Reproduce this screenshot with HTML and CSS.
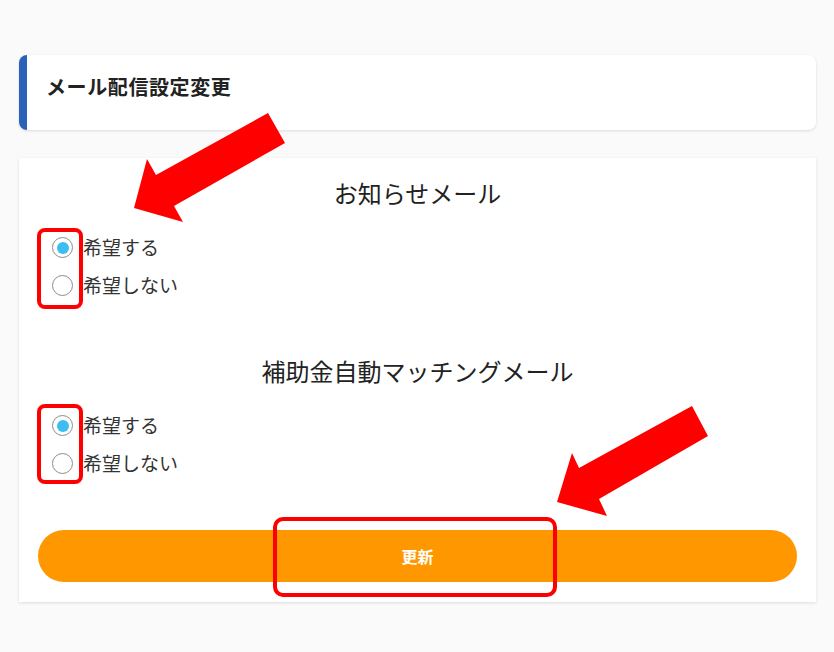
FILE: index.html
```html
<!DOCTYPE html>
<html lang="ja">
<head>
<meta charset="utf-8">
<title>メール配信設定変更</title>
<link rel="stylesheet" href="styles.css">
</head>
<body>
<div class="page">
  <div class="header-card">
    <h1 class="header-title">メール配信設定変更</h1>
  </div>
  <form class="main-card">
    <section class="section">
      <h2 class="section-title">お知らせメール</h2>
      <div class="options">
        <label class="option"><span class="radio checked"></span><span class="option-text">希望する</span></label>
        <label class="option"><span class="radio"></span><span class="option-text">希望しない</span></label>
      </div>
    </section>
    <section class="section section-second">
      <h2 class="section-title">補助金自動マッチングメール</h2>
      <div class="options">
        <label class="option"><span class="radio checked"></span><span class="option-text">希望する</span></label>
        <label class="option"><span class="radio"></span><span class="option-text">希望しない</span></label>
      </div>
    </section>
    <button type="button" class="submit">更新</button>
  </form>
</div>
<svg class="annotations" width="834" height="652" viewBox="0 0 834 652" xmlns="http://www.w3.org/2000/svg">
  <polygon fill="#ff0000" points="268,113 285,143 174,206 183,222 134,208 147,159 156,175"/>
  <polygon fill="#ff0000" points="692,406 708,436 599,499 607,516 557,502 572,453 579,468"/>
  <rect x="39" y="230" width="42" height="77" rx="6" fill="none" stroke="#ff0000" stroke-width="4"/>
  <rect x="39" y="406" width="42" height="76" rx="6" fill="none" stroke="#ff0000" stroke-width="4"/>
  <rect x="275" y="519" width="280" height="76" rx="8" fill="none" stroke="#ff0000" stroke-width="4"/>
</svg>
</body>
</html>
```

FILE: styles.css
```css
* {
  box-sizing: border-box;
}

html, body {
  margin: 0;
  padding: 0;
}

body {
  background: #fafafa;
  font-family: "Noto Sans CJK JP", "Noto Sans", sans-serif;
  color: #333;
  width: 834px;
  height: 652px;
  overflow: hidden;
  position: relative;
}

.page {
  padding: 55px 18px 0 19px;
  display: flex;
  flex-direction: column;
  gap: 28px;
}

.header-card {
  height: 75px;
  background: #fff;
  border-left: 8px solid #2962b8;
  border-radius: 8px;
  box-shadow: 0 1px 3px rgba(0, 0, 0, 0.12);
  display: flex;
  align-items: center;
  padding-left: 19px;
  padding-bottom: 12px;
}

.header-title {
  margin: 0;
  font-size: 20px;
  font-weight: 700;
  color: #222;
  line-height: 1;
  letter-spacing: 0.6px;
}

.main-card {
  background: #fff;
  box-shadow: 0 1px 3px rgba(0, 0, 0, 0.12);
  padding: 17px 19px 20px;
  display: flex;
  flex-direction: column;
}

.section {
  display: flex;
  flex-direction: column;
  gap: 18px;
}

.section-second {
  margin-top: 49px;
}

.section-title {
  margin: 0;
  text-align: center;
  font-size: 24px;
  font-weight: 400;
  line-height: 36px;
  color: #222;
}

.options {
  display: flex;
  flex-direction: column;
}

.option {
  display: flex;
  align-items: center;
  height: 37.5px;
  padding-left: 14px;
  gap: 10px;
}

.radio {
  width: 21px;
  height: 21px;
  border-radius: 50%;
  border: 1.5px solid #8c8c8c;
  display: flex;
  align-items: center;
  justify-content: center;
  flex: none;
}

.radio.checked::after {
  content: "";
  width: 12px;
  height: 12px;
  border-radius: 50%;
  background: #3dbdf2;
}

.option-text {
  font-size: 19px;
  line-height: 1;
  color: #333;
  margin-top: -2px;
}

.submit {
  margin-top: 48px;
  height: 52px;
  border: none;
  border-radius: 26px;
  background: #ff9800;
  color: #fff;
  font-family: "Noto Sans CJK JP", "Noto Sans", sans-serif;
  font-size: 16px;
  font-weight: 700;
  cursor: pointer;
}

.annotations {
  position: absolute;
  left: 0;
  top: 0;
  pointer-events: none;
}
```
